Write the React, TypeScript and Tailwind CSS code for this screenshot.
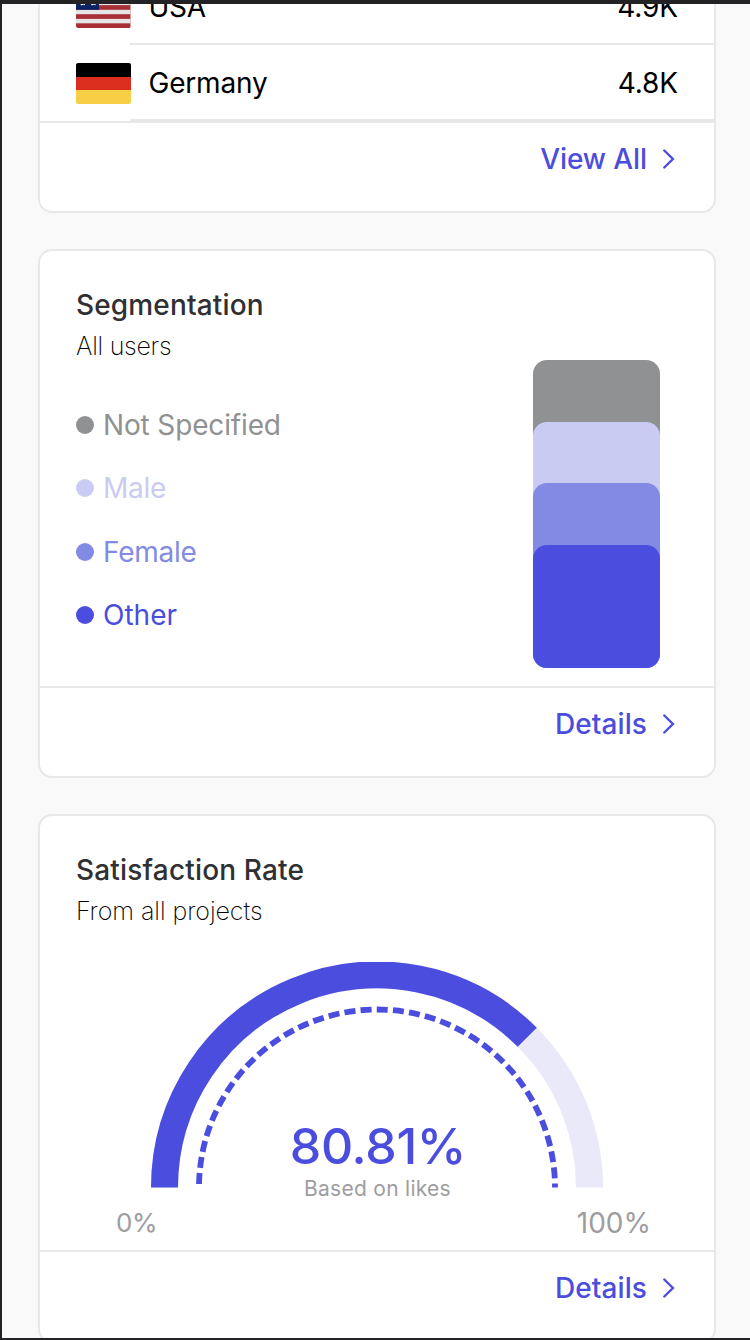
import type { ReactNode } from "react";

function Chevron() {
  return (
    <svg className="-mt-px mr-[0.5px] h-5 w-3 shrink-0" viewBox="0 0 12 20" fill="none">
      <path d="M1.300 1.500 9.900 10 1.300 18.500" stroke="#4B4DDE" strokeWidth="2.4" strokeLinecap="round" strokeLinejoin="miter" />
    </svg>
  );
}

function Footer({ label, spacing }: { label: string; spacing: string }) {
  return (
    <div className="flex h-[91px] shrink-0 justify-end border-t-2 border-[#e8e8ea] pt-[16px] pr-[39px]">
      <div className="flex h-10 items-center gap-[15.500px]">
        <span className={"text-[28px] leading-10 font-medium text-[#4B4DDE] " + spacing}>{label}</span>
        <Chevron />
      </div>
    </div>
  );
}

function Card({ children, className }: { children: ReactNode; className: string }) {
  return (
    <section className={"flex shrink-0 flex-col border-2 border-[#e8e8ea] bg-white " + className}>{children}</section>
  );
}

function Heading({ title, subtitle, titleSpacing, subSpacing }: { title: string; subtitle: string; titleSpacing: string; subSpacing: string }) {
  return (
    <header>
      <h2 className={"text-[28px] leading-[40px] font-medium text-[#303032] " + titleSpacing}>{title}</h2>
      <p className={"pt-px text-[25px] leading-[40px] font-extralight text-black " + subSpacing}>{subtitle}</p>
    </header>
  );
}

function GermanFlag() {
  return (
    <div className="mt-[18px] flex h-[41px] w-[54.5px] shrink-0 flex-col overflow-hidden rounded-[2px]">
      <div className="flex-1 bg-black" />
      <div className="flex-1 bg-[#DC2E1F]" />
      <div className="flex-1 bg-[#F6CF46]" />
    </div>
  );
}

function AmericanFlag() {
  return (
    <svg className="mt-[18px] h-[41px] w-[54.5px] shrink-0 rounded-[2px]" viewBox="0 0 54.5 41">
      <rect width="54.5" height="41" fill="#A73036" />
      {[4.6, 13.7, 22.8, 31.9].map((y) => (
        <rect key={y} y={y} width="54.5" height="4.4" fill="#E6E6E6" />
      ))}
      <rect width="23" height="22.8" fill="#0B2361" />
      <path d="M4 16.6h5v1.8l-1.500-.8-2 .8zM14.500 16.600h5v1.800l-1.500-.8-2 .8z" fill="#fff" />
    </svg>
  );
}

function CountryRow({ flag, name, value, spacing }: { flag: ReactNode; name: string; value: string; spacing: string }) {
  return (
    <div className="flex h-[76px] shrink-0 pl-9">
      {flag}
      <div className="-ml-[0.5px] flex flex-1 items-center justify-between border-b-2 border-[#e8e8ea] pt-[2px] pr-9 pl-[18.500px] text-[28px] leading-10 text-black">
        <span className={spacing}>{name}</span>
        <span className="tracking-[-0.1px]">{value}</span>
      </div>
    </div>
  );
}

const segments = [
  { label: "Not Specified", dot: "bg-[#909192]", text: "text-[#909192] tracking-[-0.15px]" },
  { label: "Male", dot: "bg-[#CACBF3]", text: "text-[#CACBF3] tracking-[-0.3px]" },
  { label: "Female", dot: "bg-[#838AE4]", text: "text-[#838AE4] tracking-[-0.25px]" },
  { label: "Other", dot: "bg-[#4B4DDE]", text: "text-[#4B4DDE] tracking-[0px]" },
];

function StackedBar() {
  return (
    <div className="h-[307.500px] w-[126.7px] rounded-[14px] bg-[#909192] pt-[61.5px]">
      <div className="h-full rounded-[14px] bg-[#CACBF3] pt-[61.5px]">
        <div className="h-full rounded-[14px] bg-[#838AE4] pt-[61.5px]">
          <div className="h-full rounded-[14px] bg-[#4B4DDE]" />
        </div>
      </div>
    </div>
  );
}

function Gauge() {
  return (
    <svg className="h-[226px] w-[452px]" viewBox="0 0 452 226" fill="none">
      <path d="M13.500 225.500A212.500 212.500 0 0 1 438.500 225.500" stroke="#EAE9FA" strokeWidth="27" />
      <path d="M13.500 225.500A212.500 212.500 0 0 1 376.260 75.240" stroke="#4B4DDE" strokeWidth="27" />
      <path d="M48 225.500A178 178 0 0 1 404 225.500" stroke="#4B4DDE" strokeWidth="5.800" strokeDasharray="11 5.22" strokeDashoffset="-3.5" />
    </svg>
  );
}

export default function App() {
  return (
    <main className="flex h-[1340px] w-[750px] flex-col overflow-hidden border-t-4 border-b-2 border-l-2 border-[#232325] bg-[#f9f9f9] pr-[34px] pl-9 font-['Inter','Liberation_Sans',sans-serif]">
      <Card className="h-[209px] rounded-b-[14px] border-t-0">
        <div className="flex h-[41px] shrink-0 flex-col justify-end overflow-hidden">
          <CountryRow flag={<AmericanFlag />} name="USA" value="4.9K" spacing="tracking-[-0.3px]" />
        </div>
        <CountryRow flag={<GermanFlag />} name="Germany" value="4.8K" spacing="tracking-[-0.2px]" />
        <Footer label="View All" spacing="tracking-[-0.1px]" />
      </Card>

      <Card className="mt-9 h-[529px] rounded-[14px]">
        <div className="flex h-[435px] shrink-0 justify-between pt-[34px] pr-[54px] pl-9">
          <div>
            <Heading title="Segmentation" subtitle="All users" titleSpacing="tracking-[0.15px]" subSpacing="tracking-[-0.25px]" />
            <ul className="mt-[27.500px]">
              {segments.map((s) => (
                <li key={s.label} className="flex h-[63.3px] items-center gap-[9px]">
                  <span className={"size-[18px] rounded-full " + s.dot} />
                  <span className={"text-[28px] leading-10 font-normal " + s.text}>{s.label}</span>
                </li>
              ))}
            </ul>
          </div>
          <div className="pt-[75px]">
            <StackedBar />
          </div>
        </div>
        <Footer label="Details" spacing="tracking-[0.1px]" />
      </Card>

      <Card className="mt-9 h-[529px] rounded-[14px]">
        <div className="h-[434px] shrink-0 pt-[34px] pl-9">
          <Heading title="Satisfaction Rate" subtitle="From all projects" titleSpacing="tracking-[0.17px]" subSpacing="tracking-[-0.05px]" />
          <div className="relative mt-[30.500px] ml-[75px] w-[452px]">
            <Gauge />
            <div className="absolute inset-x-0 top-[154px] flex flex-col items-center">
              <strong className="ml-[2px] text-[50px] leading-[60px] font-medium tracking-[-0.3px] text-[#4B4DDE]">80.81%</strong>
              <span className="ml-[1px] text-[21px] leading-[26px] font-normal tracking-[0.28px] text-[#9d9d9f]">Based on likes</span>
            </div>
          </div>
          <div className="mt-[15px] flex justify-between pr-[63px] pl-[40px] leading-10 font-normal text-[#9d9d9f]">
            <span className="text-[26px] tracking-[-0.3px]">0%</span>
            <span className="text-[28px]">100%</span>
          </div>
        </div>
        <Footer label="Details" spacing="tracking-[0.1px]" />
      </Card>
    </main>
  );
}
